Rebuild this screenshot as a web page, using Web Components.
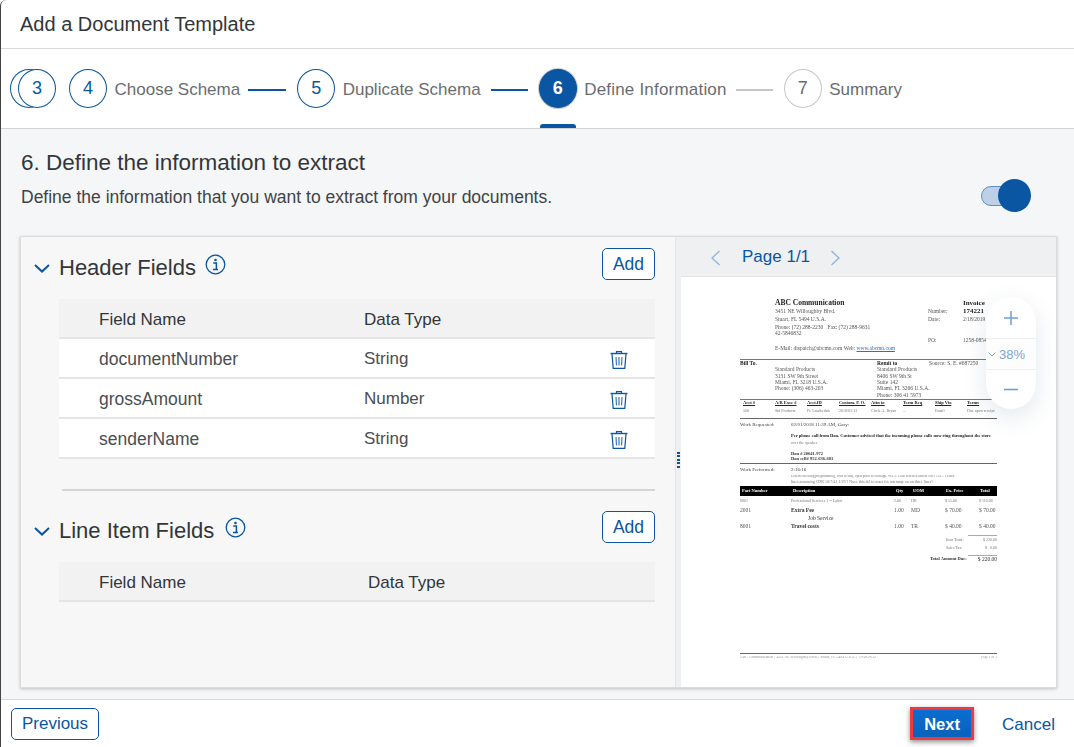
<!DOCTYPE html>
<html><head><meta charset="utf-8"><style>
html,body{margin:0;padding:0;background:#fff;overflow:hidden}
body{font-family:"Liberation Sans",sans-serif;color:#32363a}
</style></head><body>
<app-shell></app-shell>
<script>
const BLUE='#0a56a2';
const trash=`<svg width="20" height="20" viewBox="0 0 20 20" fill="none" stroke="${BLUE}"><path d="M1.5 3.5h17" stroke-width="1.4"/><path d="M7.5 3V1.6h5V3" stroke-width="1.2"/><path d="M3 4l1.2 14.3h11.6L17 4" stroke-width="1.2"/><path d="M7 7l.5 8.5M10 7v8.5M13 7l-.5 8.5" stroke-width="1.2" stroke="#3f7ab8"/></svg>`;
const infoI=`<svg width="21" height="21" viewBox="0 0 21 21" fill="none"><circle cx="10.5" cy="10.5" r="9.3" stroke="${BLUE}" stroke-width="1.3"/><circle cx="10.5" cy="6" r="1.3" fill="${BLUE}"/><path d="M8.2 9h3.2v6.2M8 15.5h5" stroke="${BLUE}" stroke-width="1.5"/></svg>`;
const chev=`<svg width="16" height="9" viewBox="0 0 16 9" fill="none"><path d="M1 1l7 6.6L15 1" stroke="${BLUE}" stroke-width="2"/></svg>`;

class StepItem extends HTMLElement{
 connectedCallback(){
  const n=this.getAttribute('n'),st=this.getAttribute('state')||'done',label=this.getAttribute('label')||'',line=this.getAttribute('line');
  this.attachShadow({mode:'open'}).innerHTML=`<style>
  :host{display:flex;align-items:center;position:relative;height:79px}
  .c{box-sizing:border-box;width:38px;height:39px;border-radius:50%;border:1px solid ${BLUE};color:${BLUE};display:flex;align-items:center;justify-content:center;font-size:18px;background:#fff;position:relative}
  :host([state=active]) .c{background:${BLUE};color:#fff;font-weight:700;box-shadow:0 0 0 1px #c9c9c9}
  :host([state=todo]) .c{border-color:#c8c8c8;color:#6a6d70}
  .l{margin-left:7.5px;font-size:var(--lf);color:#6a6d70;white-space:nowrap;position:relative;top:1px;letter-spacing:var(--sl,0)}
  .ln{height:2px;margin-top:3px;background:${BLUE}}
  :host([state=active]) .ln{background:#c6c6c6}
  .ind{position:absolute;left:1px;bottom:0;width:36px;height:4px;background:${BLUE};border-radius:3px 3px 0 0}
  .back{position:absolute;left:-8px;top:20px;box-sizing:border-box;width:38px;height:39px;border-radius:50%;border:1px solid ${BLUE}}
  </style>${this.hasAttribute('stack')?'<div class="back"></div>':''}<div class="c">${n}</div>${label?`<div class="l">${label}</div>`:''}${line?`<div class="ln" style="width:${line}px;margin-left:${this.getAttribute('ll')}px"></div>`:''}${st==='active'?'<div class="ind"></div>':''}`;
 }
}
customElements.define('step-item',StepItem);

class OutlineBtn extends HTMLElement{
 connectedCallback(){
  this.attachShadow({mode:'open'}).innerHTML=`<style>:host{display:flex;box-sizing:border-box;height:32px;align-items:center;justify-content:center;background:#fff;border:1px solid ${BLUE};border-radius:5px;color:${BLUE};font-size:var(--bf,17.5px);padding-top:1px}</style><slot></slot>`;
 }
}
customElements.define('outline-btn',OutlineBtn);

class FieldTable extends HTMLElement{
 connectedCallback(){
  const rows=JSON.parse(this.getAttribute('rows')||'[]');
  const col2=+(this.getAttribute('col2')||'305');
  this.attachShadow({mode:'open'}).innerHTML=`<style>
  :host{display:block;margin-left:38px;width:596px;font-size:var(--tf)}
  .r{display:flex;align-items:center;box-sizing:border-box;height:40px;background:#fff;border-bottom:2px solid #e5e5e5;padding-left:40px;position:relative}
  .h{background:#f2f2f2;color:#32363a;padding-top:4px}
  .a0{width:${col2-40}px}
  .t{position:absolute;left:550px;top:11px;height:20px;display:block}
  .d{color:#4a4e52;font-size:17.5px;padding-top:2px}
  .d div+div{font-size:17px}
  </style>
  <div class="r h"><div class="a0">Field Name</div><div>Data Type</div></div>
  ${rows.map(r=>`<div class="r d"><div class="a0">${r[0]}</div><div>${r[1]}</div><span class="t">${trash}</span></div>`).join('')}`;
 }
}
customElements.define('field-table',FieldTable);

class FieldSection extends HTMLElement{
 connectedCallback(){
  this.attachShadow({mode:'open'}).innerHTML=`<style>
  :host{display:block}
  .hd{display:flex;align-items:center;height:32px;margin-left:13px;width:621px}
  .ch{width:16px;height:9px;margin-top:8px;display:block;line-height:0}
  .ti{margin-left:9px;font-size:var(--hf);color:#32363a;position:relative;top:4px}
  .inf{margin-left:${this.getAttribute('ig')||9}px;margin-top:1px;line-height:0}
  outline-btn{margin-left:auto;width:53px}
  .sp{height:19px}
  </style>
  <div class="hd"><span class="ch">${chev}</span><span class="ti">${this.getAttribute('heading')}</span><span class="inf">${infoI}</span><outline-btn>Add</outline-btn></div>
  <div class="sp"></div><slot></slot>`;
 }
}
customElements.define('field-section',FieldSection);

class InvoiceDoc extends HTMLElement{
 connectedCallback(){
  const row=(h,cells,extra='')=>`<div class="row" style="height:${h}px;${extra}">${cells.map(c=>`<span style="width:${c[1]}px;${c[2]||''}">${c[0]}</span>`).join('')}</div>`;
  const rule=(h,mt=0,mb=0,c='#777')=>`<div style="height:${h}px;background:${c};margin:${mt}px 0 ${mb}px"></div>`;
  const B='font-weight:700;color:#222;';const U='text-decoration:underline;';const S='font-size:4px;color:#777;';
  const W='font-weight:700;color:#fff;';const H=B+U+'font-size:4.5px;';
  this.attachShadow({mode:'open'}).innerHTML=`<style>
  :host{display:block;box-sizing:border-box;background:#fff;height:100%;padding:22px 59px 0;font-family:"Liberation Serif",serif;font-size:5.5px;color:#555;overflow:hidden;line-height:1;filter:blur(.25px)}
  .row{display:flex;align-items:center;white-space:nowrap;overflow:visible}
  .row span{display:block;flex:none;overflow:hidden}
  .blk{background:#000;color:#fff}
  a{color:#2a6fc9;text-decoration:underline}
  </style>
  ${row(8,[['',35],['ABC Communication',188,B+'font-size:7.5px;overflow:visible'],['Invoice',34,B+'font-size:7px']])}
  ${row(9,[['',35],['3451 NE Willoughby Blvd.',153],['Number:',35],['174221',34,B+'font-size:7px']])}
  ${row(8,[['',35],['Stuart, FL 5494 U.S.A.',153],['Date:',35],['2/18/2019',34]])}
  ${row(7,[['',35],['Phone: (72) 288-2230 &nbsp; Fax: (72) 288-9631',153]])}
  ${row(6,[['',35],['42-5846832',153]])}
  ${row(8,[['',188],['PO:',35],['1258-0854',34]])}
  ${row(8,[['',35],['E-Mail: dispatch@abcmn.com Web: <a>www.abcmn.com</a>',153]])}
  ${rule(1,6,0)}
  ${row(7,[['Bill To.',137,B+U],['Remit to',52,B+U],['Source: S. E. #687250',60]])}
  ${row(6,[['',35],['Standard Products',102],['Standard Products',60]])}
  ${row(7,[['',35],['3131 SW 9th Street',102],['8406 SW 9th St',60]])}
  ${row(6,[['',35],['Miami, FL 3218 U.S.A.',102],['Suite 142',60]])}
  ${row(6,[['',35],['Phone: (306) 463-203',102],['Miami, FL 3266 U.S.A.',60]])}
  ${row(7,[['',137],['Phone: 306 41 5973',80]])}
  ${rule(1,0,0)}
  ${row(7,[['Acct #',32,H+'margin-left:3px'],['A/R Exec #',32,H],['Acct.ID',32,H],['Custom. P. O.',32,H],['Attn to',32,H],['Term Req',32,H],['Ship Via',32,H],['Terms',22,H]])}
  ${row(7,[['500',32,S+'margin-left:3px'],['Std Products',32,S],['Ft. Lauderdale',32,S],['2018/01/13',32,S],['Circle A. Bryan',32,S],['...',32,S],['Email',32,S],['Due upon receipt',29,S]])}
  ${rule(1.5,3.5,0,'#666')}
  ${row(11,[['Work Requested:',51,'color:#444;font-size:5px'],['02/01/2018 11:39 AM, Gary:',200,'color:#444;font-size:5px']])}
  ${row(8,[['',51],['Per phone call from Dan. Customer advised that the incoming phone calls now ring throughout the store',206,'color:#222;font-size:4.5px;font-weight:700']],'margin-top:2px')}
  ${row(5,[['',51],['over the speaker',150,S]])}
  ${row(6,[['',51],['Dan # 20641-972',150,'color:#333;font-size:4.5px;font-weight:700']],'margin-top:6px')}
  ${row(4,[['',51],['Dan cell# 952-636-681',150,'color:#333;font-size:4.5px;font-weight:700']])}
  ${rule(1,2,0,'#666')}
  ${row(10,[['Work Performed:',51,'color:#444;font-size:5px'],['2:16:16',100,'color:#444;font-size:5px']])}
  ${row(5,[['',51],['Lorem checking programming, visit to stay, open ports to reassign. W.I.T. 1266 test/ices and at NBT 1227. Tested',206,'font-size:3.6px;color:#777']])}
  ${row(5,[['',51],['lines assuming CDK 10/7/41 1/29 ? Nave this del to asset fix warranty on an three lines?',206,S]])}
  ${`<div class="row blk" style="height:10px;margin-top:2px">${[['Part Number',51],['Description',103],['Qty',17],['UOM',33],['Ex. Price',34],['Total',19]].map(c=>`<span style="width:${c[1]}px;${W}font-size:4.5px;padding-left:2px;box-sizing:border-box">${c[0]}</span>`).join('')}</div>`}
  ${row(10,[['8001',51,S],['Professional Services 1 -- Labor',103,S],['2.00',17,S],['HR',34,S],['$ 55.00',34,S],['$ 110.00',18,S]])}
  ${row(9,[['2001',51],['Extra Fee',103,'font-weight:700;color:#333'],['1.00',17],['MD',34],['$ 70.00',34],['$ 70.00',18]])}
  ${row(7,[['',68],['Job Service',100,'color:#333']])}
  ${row(9,[['8001',51],['Travel costs',103,'font-weight:700;color:#333'],['1.00',17],['TR',34],['$ 40.00',34],['$ 40.00',18]])}
  <div style="height:1px;background:#aaa;margin:4px 0 0 228px"></div>
  ${row(7,[['',206],['Item Total:',22,S],['$ 220.00',29,S+'text-align:right']])}
  ${row(9,[['',206],['Sales Tax:',22,S],['$ &nbsp; 0.00',29,S+'text-align:right']])}
  <div style="height:1px;background:#aaa;margin:3px 0 0 228px"></div>
  ${row(7,[['',190],['Total Amount Due:',38,'font-weight:700;color:#333;font-size:4.5px'],['$ 220.00',29,'text-align:right;color:#333']])}
  ${rule(1,90,0,'#666')}
  ${row(7,[['ABC Communication | 3451 NE Willoughby Blvd. | Stuart, FL 5494 U.S.A. | 72-583-032',240,'font-size:3.8px;color:#999'],['Page 1 of 1',17,'font-size:3.5px;color:#999;text-align:right']])}`;
 }
}
customElements.define('invoice-doc',InvoiceDoc);

class ZoomPill extends HTMLElement{
 connectedCallback(){
  this.attachShadow({mode:'open'}).innerHTML=`<style>
  :host{position:absolute;left:305px;top:20px;width:50px;height:112px;background:#fff;border-radius:25px;box-shadow:0 8px 24px rgba(60,90,130,.14);display:flex;flex-direction:column;z-index:2}
  .p{height:40px;display:flex;align-items:center;justify-content:center;line-height:0}
  .m{height:31px;border-top:1px solid #eee;border-bottom:1px solid #eee;display:flex;align-items:center;gap:3px;padding-left:2px;color:#79a6d6;font-size:13px;background:#fdfdfd}
  </style>
  <div class="p" style="padding-top:2px"><svg width="14" height="14" viewBox="0 0 14 14"><path d="M7 0v14M0 7h14" stroke="#6f9fd2" stroke-width="1.5"/></svg></div>
  <div class="m"><svg width="8" height="5" viewBox="0 0 8 5" fill="none"><path d="M.5.5L4 4 7.5.5" stroke="#79a6d6"/></svg><span>38%</span></div>
  <div class="p"><svg width="14" height="3" viewBox="0 0 14 3"><path d="M0 1.5h14" stroke="#6f9fd2" stroke-width="1.6"/></svg></div>`;
 }
}
customElements.define('zoom-pill',ZoomPill);

class AppShell extends HTMLElement{
 connectedCallback(){
  const rows=[['documentNumber','String'],['grossAmount','Number'],['senderName','String']];
  this.attachShadow({mode:'open'}).innerHTML=`<style>
  :host{--lf:17px;--tf:17px;--hf:22px;display:flex;flex-direction:column;box-sizing:border-box;width:1074px;height:747px;border-left:1px solid #444;border-top-left-radius:6px;font-family:"Liberation Sans",sans-serif;color:#32363a;background:#fff;overflow:hidden}
  .title{box-sizing:border-box;height:49px;border-bottom:1px solid #d9d9d9;padding:0 0 0 19px;display:flex;align-items:center;font-size:20px}
  .steps{box-sizing:border-box;height:80px;border-bottom:1px solid #d4d4d4;display:flex;padding-left:17px;align-items:flex-start}
  .main{flex:1;background:#f5f6f7;padding:0 17px 10px 19px;display:flex;flex-direction:column;min-height:0}
  .h1{font-size:22.5px;margin-top:20px;margin-left:1px;height:28px;line-height:28px}
  .subrow{display:flex;align-items:center;height:33px;margin-top:2px}
  .sub{font-size:17.5px;color:#3f4347;margin-left:1px;position:relative;top:2px}
  .tg{margin-left:auto;position:relative;width:50px;height:33px;margin-right:26px}
  .tr{position:absolute;left:0;top:7px;width:40px;height:20px;box-sizing:border-box;background:#bdd0e6;border:1px solid #5b8fc9;border-radius:10px}
  .kn{position:absolute;left:17px;top:0;width:33px;height:33px;border-radius:50%;background:${BLUE}}
  .panel{margin-top:24px;height:452px;box-sizing:border-box;border:1px solid #dcdcdc;box-shadow:0 1px 3px rgba(0,0,0,.22);display:grid;grid-template-columns:654px 6px 1fr;background:#f7f7f7}
  .left{padding-top:11px;min-width:0}
  .split{background:#eff0f1;position:relative;border-left:1px solid #e4e4e4}
  .dots{position:absolute;left:1px;top:215px;width:3px;height:17px;background:repeating-linear-gradient(${BLUE} 0 2px,transparent 2px 3.5px)}
  .right{display:flex;flex-direction:column;position:relative;min-width:0}
  .ph{box-sizing:border-box;height:40px;background:#eff0f1;border-bottom:1px solid #e3e3e3;display:flex;align-items:center;color:${BLUE};font-size:17px;padding-left:29px}
  .ph svg{display:block;position:relative;top:1px}
  .ph span{margin:0 20px 0 21px;position:relative;top:0}
  .docw{flex:1;position:relative;min-height:0}
  .div{height:2px;background:#d5d5d5;margin:30px 0 20px 41px;width:593px}
  .foot{box-sizing:border-box;height:48px;border-top:1px solid #d9d9d9;display:flex;align-items:center;padding:0 19px 0 10px;flex:none}
  .foot outline-btn{--bf:17px;width:88px;height:32px}
  .next{margin-left:auto;box-sizing:border-box;width:64px;height:33px;background:linear-gradient(#0a6ed1,#0a62bb);border:3px solid #f0383f;color:#fff;font-size:16.5px;font-weight:700;display:flex;align-items:center;justify-content:center;box-shadow:0 2px 5px rgba(0,0,0,.45);padding-top:1px}
  .cancel{margin-left:28px;color:${BLUE};font-size:17px;position:relative;top:1px}
  </style>
  <div class="title">Add a Document Template</div>
  <div class="steps">
   <step-item n="3" stack style="margin-right:13px"></step-item>
   <step-item n="4" label="Choose Schema" line="38" ll="8" style="margin-right:11px"></step-item>
   <step-item n="5" label="Duplicate Schema" line="37" ll="10" style="margin-right:11px"></step-item>
   <step-item n="6" state="active" label="Define Information" line="37" ll="9" style="margin-right:11px;--sl:.2px"></step-item>
   <step-item n="7" state="todo" label="Summary"></step-item>
  </div>
  <div class="main">
   <div class="h1">6. Define the information to extract</div>
   <div class="subrow"><div class="sub">Define the information that you want to extract from your documents.</div><div class="tg"><div class="tr"></div><div class="kn"></div></div></div>
   <div class="panel">
    <div class="left">
     <field-section heading="Header Fields"><field-table rows='${JSON.stringify(rows)}' col2="305"></field-table></field-section>
     <div class="div"></div>
     <field-section heading="Line Item Fields" ig="11"><field-table col2="309"></field-table></field-section>
    </div>
    <div class="split"><div class="dots"></div></div>
    <div class="right">
     <div class="ph"><svg width="11" height="16" viewBox="0 0 11 16" fill="none"><path d="M9.5 1L2 8l7.5 7" stroke="#8fb2d8" stroke-width="1.3"/></svg><span>Page 1/1</span><svg width="11" height="16" viewBox="0 0 11 16" fill="none"><path d="M1.5 1L9 8l-7.5 7" stroke="#8fb2d8" stroke-width="1.3"/></svg></div>
     <div class="docw"><invoice-doc></invoice-doc><zoom-pill></zoom-pill></div>
    </div>
   </div>
  </div>
  <div class="foot"><outline-btn>Previous</outline-btn><div class="next">Next</div><div class="cancel">Cancel</div></div>`;
 }
}
customElements.define('app-shell',AppShell);
</script>
</body></html>
